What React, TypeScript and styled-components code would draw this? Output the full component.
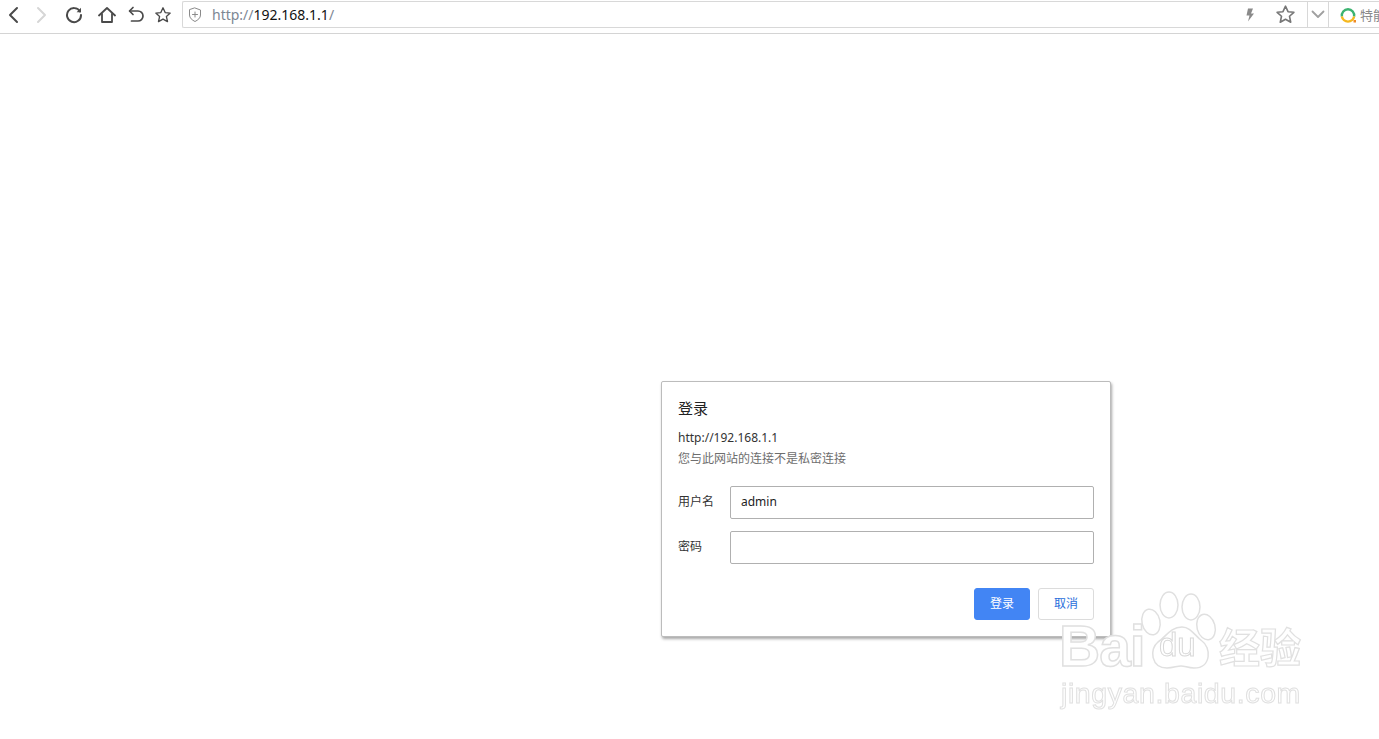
import { createGlobalStyle } from "styled-components"
import styled from "styled-components"

const GlobalStyle = createGlobalStyle`
  html, body {
    margin: 0;
    padding: 0;
    background: #fff;
    overflow: hidden;
  }
  body {
    font-family: "Noto Sans", "Noto Sans CJK SC", sans-serif;
  }
`

const Page = styled.div`
  position: relative;
  width: 1379px;
  height: 739px;
  overflow: hidden;
`

const Toolbar = styled.header`
  display: flex;
  align-items: flex-start;
  height: 33px;
  border-bottom: 1px solid #d4d4d4;
`

const NavButton = styled.button<{ $width: number }>`
  display: flex;
  align-items: center;
  justify-content: center;
  width: ${(p) => p.$width}px;
  height: 30px;
  padding: 0;
  border: none;
  background: none;
`

const NavGroup = styled.nav`
  display: flex;
  width: 182px;
  flex: none;
`

const AddressBar = styled.div`
  flex: none;
  display: flex;
  align-items: center;
  width: 1197px;
  height: 27px;
  margin-top: 1px;
  box-sizing: border-box;
  border: 1px solid #d8d8d8;
  border-right: none;
  border-radius: 2px 0 0 2px;
  padding-left: 5px;
`

const Url = styled.span`
  margin-left: 10px;
  font-size: 14px;
  color: #7d8794;
`

const UrlHost = styled.span`
  color: #111;
`

const BarActions = styled.div`
  display: flex;
  align-items: center;
  margin-left: auto;
  height: 100%;
`

const BarIcon = styled.span<{ $width: number; $divider?: boolean; $inset?: number }>`
  display: flex;
  align-items: center;
  justify-content: center;
  width: ${(p) => p.$width}px;
  height: 100%;
  box-sizing: border-box;
  padding-right: ${(p) => p.$inset ?? 0}px;
  ${(p) => (p.$divider ? "border-left: 1px solid #d8d8d8;" : "")}
`

const SearchHint = styled.span`
  display: flex;
  align-items: center;
  gap: 4px;
  width: 51px;
  height: 100%;
  padding-left: 11px;
  box-sizing: border-box;
  border-left: 1px solid #d8d8d8;
  font-size: 13px;
  color: #8a8a8a;
  white-space: nowrap;
  overflow: hidden;
`

const Main = styled.main`
  padding: 347px 0 0 661px;
`

const Dialog = styled.section`
  width: 450px;
  height: 256px;
  box-sizing: border-box;
  padding: 17px 16px 0;
  background: #fff;
  border: 1px solid #bcbcbc;
  border-radius: 2px;
  box-shadow: 1px 2px 3px rgba(0, 0, 0, 0.35);
`

const Title = styled.h1`
  margin: 0;
  font-size: 15px;
  line-height: 18px;
  font-weight: 400;
  color: #222;
`

const Origin = styled.div`
  margin-top: 13px;
  font-size: 12px;
  line-height: 16px;
  color: #333;
`

const Notice = styled.div`
  margin-top: 5px;
  font-size: 12px;
  line-height: 16px;
  color: #6e6e6e;
`

const Form = styled.form`
  display: flex;
  flex-direction: column;
  gap: 12px;
  margin-top: 19px;
`

const Field = styled.label`
  display: flex;
  align-items: center;
  font-size: 12px;
  color: #333;
`

const FieldName = styled.span`
  width: 52px;
  flex: none;
  padding-bottom: 4px;
`

const Input = styled.input`
  width: 364px;
  height: 33px;
  box-sizing: border-box;
  padding: 0 10px 2px;
  border: 1px solid #b0b0b0;
  border-radius: 2px;
  outline: none;
  font-family: "Noto Sans", sans-serif;
  font-size: 12px;
  color: #222;
  background: #fff;
`

const Actions = styled.div`
  display: flex;
  justify-content: flex-end;
  gap: 8px;
  margin-top: 12px;
`

const Button = styled.button<{ $primary?: boolean }>`
  width: 56px;
  height: 32px;
  padding: 0 0 2px;
  box-sizing: border-box;
  border-radius: 3px;
  border: 1px solid ${(p) => (p.$primary ? "#4285f4" : "#dcdcdc")};
  background: ${(p) => (p.$primary ? "#4285f4" : "#fff")};
  color: ${(p) => (p.$primary ? "#fff" : "#2a6fdb")};
  font-family: inherit;
  font-size: 12px;
`

const Watermark = styled.div`
  position: absolute;
  left: 1058px;
  top: 590px;
  width: 250px;
  height: 122px;
  pointer-events: none;
  filter: blur(0.4px);
`

const WatermarkBrand = styled.div`
  position: absolute;
  left: 1px;
  top: 24px;
  font-family: "Liberation Sans", sans-serif;
  font-size: 57px;
  line-height: 64px;
  font-weight: 700;
  letter-spacing: -1px;
  color: #fff;
  -webkit-text-stroke: 1.5px #e0e0e0;
  white-space: nowrap;
`

const WatermarkDu = styled.span`
  position: absolute;
  left: 101px;
  top: 36px;
  font-family: "Liberation Sans", sans-serif;
  font-size: 33px;
  line-height: 38px;
  color: #fff;
  -webkit-text-stroke: 1px #d8d8d8;
`

const WatermarkCjk = styled.div`
  position: absolute;
  left: 161px;
  top: 32px;
  font-family: "Noto Sans CJK SC", sans-serif;
  font-size: 41px;
  line-height: 46px;
  font-weight: 700;
  color: #fff;
  -webkit-text-stroke: 1.2px #e0e0e0;
  white-space: nowrap;
`

const WatermarkUrl = styled.div`
  position: absolute;
  left: 3px;
  top: 87px;
  font-family: "Liberation Sans", sans-serif;
  font-size: 28.5px;
  line-height: 32px;
  letter-spacing: 0.6px;
  color: #fff;
  -webkit-text-stroke: 1px #e0e0e0;
  white-space: nowrap;
`

const Paw = styled.svg`
  position: absolute;
  left: 82px;
  top: 0;
`

const strokeProps = {
  fill: "none",
  strokeLinecap: "round" as const,
  strokeLinejoin: "round" as const,
}

const StarIcon = ({ size, color }: { size: number; color: string }) => (
  <svg width={size} height={size} viewBox="0 0 20 20" {...strokeProps} stroke={color} strokeWidth="1.5">
    <path d="M10 2l2.400 5.300 5.600.6-4.200 3.800 1.200 5.700L10 14.500l-5 2.900 1.200-5.700L2 7.900l5.600-.6z" />
  </svg>
)

export default function App() {
  return (
    <Page>
      <GlobalStyle />
      <Toolbar>
        <NavGroup>
          <NavButton $width={25}>
            <svg width="14" height="18" viewBox="0 0 14 18" {...strokeProps} stroke="#4a4a4a" strokeWidth="2">
              <path d="M11 2L4 9l7 7" />
            </svg>
          </NavButton>
          <NavButton $width={34}>
            <svg width="14" height="18" viewBox="0 0 14 18" {...strokeProps} stroke="#d6d6d6" strokeWidth="2">
              <path d="M3 2l7 7-7 7" />
            </svg>
          </NavButton>
          <NavButton $width={29}>
            <svg width="18" height="18" viewBox="0 0 18 18" {...strokeProps} stroke="#4a4a4a" strokeWidth="2">
              <path d="M15 5.500A7 7 0 1 0 16 9" />
              <path d="M16 1.800v4.400h-4.400" fill="#4a4a4a" stroke="none" />
            </svg>
          </NavButton>
          <NavButton $width={38}>
            <svg width="18" height="18" viewBox="0 0 18 18" {...strokeProps} stroke="#4a4a4a" strokeWidth="1.8">
              <path d="M1 9.500L9 2l8 7.500" />
              <path d="M4 8v8h10V8" />
            </svg>
          </NavButton>
          <NavButton $width={20}>
            <svg width="16" height="18" viewBox="0 0 16 18" {...strokeProps} stroke="#4a4a4a" strokeWidth="1.7">
              <path d="M5 1.500L1.500 5 5 8.500" />
              <path d="M2 5h8a4.500 4.500 0 0 1 0 10H3.500" />
            </svg>
          </NavButton>
          <NavButton $width={34}>
            <StarIcon size={18} color="#4a4a4a" />
          </NavButton>
        </NavGroup>
        <AddressBar>
          <svg width="14" height="16" viewBox="0 0 14 16" {...strokeProps} stroke="#8a8a8a" strokeWidth="1">
            <path d="M7 1l5.500 2v5c0 3-2.500 5-5.500 6.500C4 13 1.500 11 1.500 8V3z" />
            <path d="M7 5v5M4.500 7.500h5" />
          </svg>
          <Url>
            http://<UrlHost>192.168.1.1</UrlHost>/
          </Url>
          <BarActions>
            <BarIcon $width={34}>
              <svg width="10" height="14" viewBox="0 0 10 14">
                <path d="M3 0.500h5L6 5.500h3L3 13.500l1.500-6H1.500z" fill="#8a8a8a" />
              </svg>
            </BarIcon>
            <BarIcon $width={40} $inset={4}>
              <StarIcon size={21} color="#777" />
            </BarIcon>
            <BarIcon $width={21} $divider>
              <svg width="14" height="9" viewBox="0 0 14 9" {...strokeProps} stroke="#a0a0a0" strokeWidth="1.8">
                <path d="M1.500 1.500L7 7l5.500-5.500" />
              </svg>
            </BarIcon>
            <SearchHint>
              <svg width="16" height="16" viewBox="0 0 16 16" fill="none" style={{ flex: "none" }}>
                <path d="M1.900 9.500A6.200 6.200 0 1 1 14.100 9.500" stroke="#3cb371" strokeWidth="2.400" />
                <path d="M1.900 9.500A6.200 6.200 0 0 0 14.100 9.500" stroke="#f5b81f" strokeWidth="2.400" />
                <rect x="13.500" y="13" width="2.500" height="2.500" fill="#f08a24" />
              </svg>
              特能
            </SearchHint>
          </BarActions>
        </AddressBar>
      </Toolbar>

      <Main>
        <Dialog>
          <Title>登录</Title>
          <Origin>http://192.168.1.1</Origin>
          <Notice>您与此网站的连接不是私密连接</Notice>
          <Form>
            <Field>
              <FieldName>用户名</FieldName>
              <Input defaultValue="admin" />
            </Field>
            <Field>
              <FieldName>密码</FieldName>
              <Input type="password" />
            </Field>
            <Actions>
              <Button $primary type="button">
                登录
              </Button>
              <Button type="button">取消</Button>
            </Actions>
          </Form>
        </Dialog>
      </Main>

      <Watermark>
        <WatermarkBrand>Bai</WatermarkBrand>
        <Paw width="80" height="82" viewBox="0 0 80 82" fill="#fff" stroke="#e0e0e0" strokeWidth="1.500">
          <ellipse cx="11" cy="32" rx="9" ry="13" transform="rotate(-12 11 32)" />
          <ellipse cx="29" cy="15" rx="9" ry="13" />
          <ellipse cx="51" cy="17" rx="9" ry="13" />
          <ellipse cx="66" cy="37" rx="9" ry="13" transform="rotate(-15 66 37)" />
          <path d="M42 37c9 0 13 9 20 14 9 6 10 27-8 27-6 0-9-2-13-2s-8 2-14 2c-16 0-18-19-9-26 8-5 12-15 24-15z" />
        </Paw>
        <WatermarkDu>du</WatermarkDu>
        <WatermarkCjk>经验</WatermarkCjk>
        <WatermarkUrl>jingyan.baidu.com</WatermarkUrl>
      </Watermark>
    </Page>
  )
}
